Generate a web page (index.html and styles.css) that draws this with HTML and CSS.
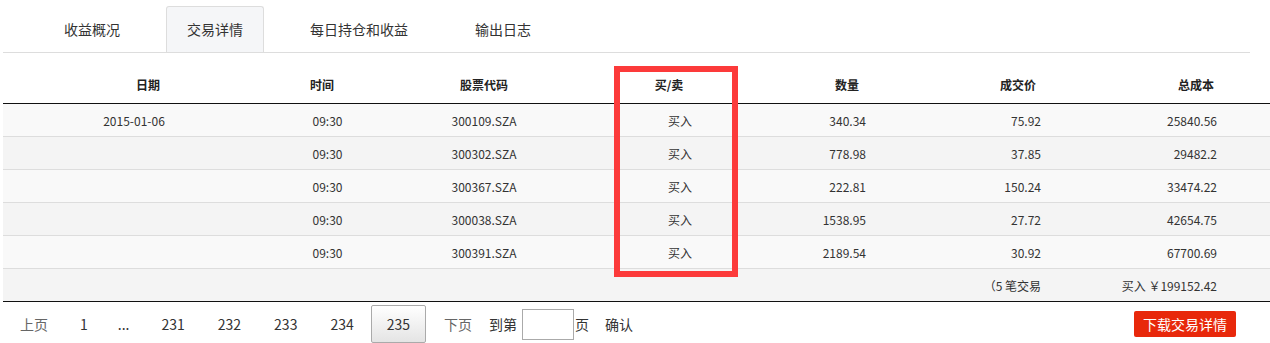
FILE: index.html
```html
<!DOCTYPE html>
<html lang="zh-CN">
<head>
  <meta charset="UTF-8" />
  <title>交易详情</title>
  <link rel="stylesheet" href="styles.css">
</head>
<body>
  <ul class="tabs">
    <li class="tab">收益概况</li>
    <li class="tab active">交易详情</li>
    <li class="tab">每日持仓和收益</li>
    <li class="tab">输出日志</li>
  </ul>

  <div class="trades">
    <table class="trade-table">
      <colgroup>
        <col class="w-date"><col class="w-time"><col class="w-code"><col class="w-side">
        <col class="w-qty"><col class="w-price"><col class="w-cost">
      </colgroup>
      <thead>
        <tr>
          <th class="h-date">日期</th>
          <th class="h-time">时间</th>
          <th>股票代码</th>
          <th class="h-side">买/卖</th>
          <th>数量</th>
          <th class="h-price">成交价</th>
          <th class="h-cost">总成本</th>
        </tr>
      </thead>
      <tbody>
        <tr>
          <td>2015-01-06</td><td>09:30</td><td>300109.SZA</td><td>买入</td>
          <td class="qty">340.34</td><td class="price">75.92</td><td class="cost">25840.56</td>
        </tr>
        <tr>
          <td></td><td>09:30</td><td>300302.SZA</td><td>买入</td>
          <td class="qty">778.98</td><td class="price">37.85</td><td class="cost">29482.2</td>
        </tr>
        <tr>
          <td></td><td>09:30</td><td>300367.SZA</td><td>买入</td>
          <td class="qty">222.81</td><td class="price">150.24</td><td class="cost">33474.22</td>
        </tr>
        <tr>
          <td></td><td>09:30</td><td>300038.SZA</td><td>买入</td>
          <td class="qty">1538.95</td><td class="price">27.72</td><td class="cost">42654.75</td>
        </tr>
        <tr>
          <td></td><td>09:30</td><td>300391.SZA</td><td>买入</td>
          <td class="qty">2189.54</td><td class="price">30.92</td><td class="cost">67700.69</td>
        </tr>
      </tbody>
      <tfoot>
        <tr>
          <td></td><td></td><td></td><td></td><td></td>
          <td class="price">（5 笔交易</td>
          <td class="cost">买入 ￥199152.42</td>
        </tr>
      </tfoot>
    </table>
    <div class="mark"></div>
  </div>

  <div class="pager">
    <span class="page-link first muted">上页</span>
    <span class="page-link">1</span>
    <span class="page-link gap">...</span>
    <span class="page-link">231</span>
    <span class="page-link">232</span>
    <span class="page-link">233</span>
    <span class="page-link">234</span>
    <span class="page-link current">235</span>
    <span class="page-link muted">下页</span>
    <span class="goto">到第</span>
    <input class="goto-input" type="text">
    <span class="goto">页</span>
    <span class="page-link">确认</span>
    <button class="download">下载交易详情</button>
  </div>
</body>
</html>
```

FILE: styles.css
```css
body {
  margin: 0;
  font-family: "Microsoft YaHei", "Noto Sans CJK SC", sans-serif;
  color: #333;
  background: #fff;
}

/* tab strip */
.tabs {
  display: flex;
  margin: 0 20px 0 3px;
  padding: 6px 0 0 40px;
  list-style: none;
  border-bottom: 1px solid #ddd;
}
.tab {
  height: 46px;
  line-height: 45px;
  padding: 0 20px;
  margin-right: 25px;
  font-size: 14px;
  color: #333;
  border: 1px solid transparent;
  border-bottom: none;
  border-radius: 3px 3px 0 0;
  box-sizing: border-box;
  cursor: pointer;
}
.tab.active {
  background: #f5f6f8;
  border-color: #ddd;
}

/* trades table */
.trades {
  position: relative;
  margin: 13px 0 0 3px;
}
.trade-table {
  width: 1267px;
  border-collapse: collapse;
  table-layout: fixed;
  font-size: 12px;
}
.w-date { width: 262px; }
.w-time { width: 125px; }
.w-code { width: 188px; }
.w-side { width: 204px; }
.w-qty { width: 130px; }
.w-price { width: 200px; }
.w-cost { width: 158px; }

.trade-table th {
  height: 37px;
  padding: 0;
  font-weight: bold;
  color: #222;
  text-align: center;
  border-bottom: 1px solid #111;
}
.trade-table .h-date { padding-left: 28px; }
.trade-table .h-time { padding-right: 11px; }
.trade-table .h-side { padding-right: 22px; }
.trade-table .h-price { padding-left: 12px; }
.trade-table .h-cost { padding-left: 10px; }

.trade-table td {
  height: 32px;
  padding: 0;
  text-align: center;
  white-space: nowrap;
  border-bottom: 1px solid #ddd;
}
.trade-table tbody tr:nth-child(odd) { background: #f9f9f9; }
.trade-table tbody tr:nth-child(even) { background: #f4f4f4; }
.trade-table tfoot tr { background: #f4f4f4; }
.trade-table tfoot td { border-bottom: 1px solid #111; }

.trade-table td.qty { text-align: right; padding-right: 46px; }
.trade-table td.price { text-align: right; padding-right: 71px; }
.trade-table td.cost { text-align: right; padding-right: 53px; }

/* highlight around the buy/sell column */
.mark {
  position: absolute;
  left: 611px;
  top: 0;
  width: 124px;
  height: 211px;
  border: 6px solid #fc3a3a;
  box-sizing: border-box;
  pointer-events: none;
}

/* pager */
.pager {
  display: flex;
  align-items: center;
  padding: 3px 34px 0 5px;
  font-size: 14px;
}
.page-link {
  height: 36px;
  line-height: 36px;
  padding: 0 15px;
  margin-right: 1px;
  border: 1px solid transparent;
  border-radius: 2px;
  color: #333;
  cursor: pointer;
}
.page-link.first { padding: 0 14px; }
.page-link.muted { color: #666; }
.page-link.gap { padding: 0 14px 0 12px; }
.page-link.current {
  margin-right: 2px;
  border-color: #aaa;
  background: linear-gradient(#fff, #e4e4e4);
}
.goto { color: #333; }
.goto-input {
  width: 52px;
  height: 31px;
  margin: 0 1px 0 5px;
  padding: 0;
  border: 1px solid #aaa;
  box-sizing: border-box;
}
.download {
  margin-left: auto;
  height: 26px;
  padding: 0 9px;
  border: none;
  border-radius: 2px;
  background: #e8280b;
  color: #fff;
  font-family: inherit;
  font-size: 14px;
  line-height: 26px;
  cursor: pointer;
}
```
